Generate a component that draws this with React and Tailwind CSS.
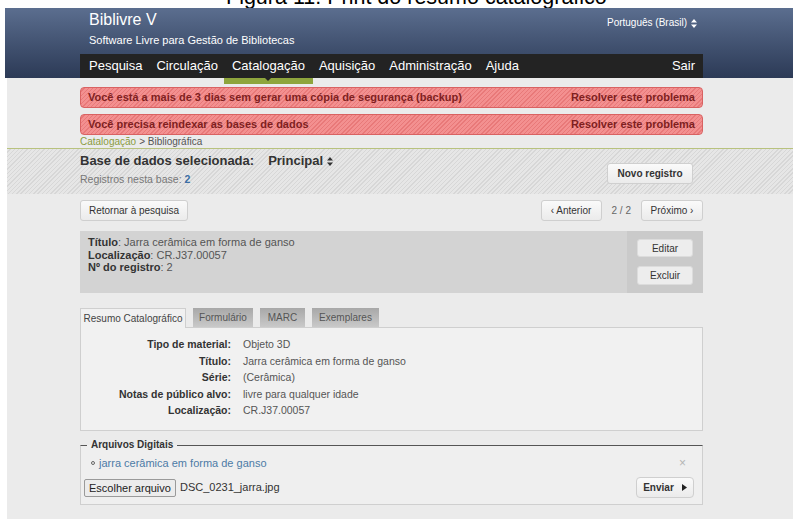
import React from 'react';

const navItems = ['Pesquisa', 'Circulação', 'Catalogação', 'Aquisição', 'Administração', 'Ajuda'];

const alerts = [
  'Você está a mais de 3 dias sem gerar uma cópia de segurança (backup)',
  'Você precisa reindexar as bases de dados',
];

const fields = [
  ['Tipo de material:', 'Objeto 3D'],
  ['Título:', 'Jarra cerâmica em forma de ganso'],
  ['Série:', '(Cerâmica)'],
  ['Notas de público alvo:', 'livre para qualquer idade'],
  ['Localização:', 'CR.J37.00057'],
];

const tabs = [
  { label: 'Resumo Catalográfico', w: 'w-[106px]', active: true },
  { label: 'Formulário', w: 'w-[60px]' },
  { label: 'MARC', w: 'w-[45px]' },
  { label: 'Exemplares', w: 'w-[67px]' },
];

function Btn({ children, className = '' }) {
  return (
    <button
      type="button"
      className={`flex items-center justify-center rounded-[3px] border border-[#cfcfcf] bg-gradient-to-b from-[#fafafa] to-[#ebebeb] text-[10px] text-[#333] ${className}`}
    >
      {children}
    </button>
  );
}

function UpDown() {
  return (
    <svg width="6" height="9" viewBox="0 0 6 9" className="ml-[4px] inline-block">
      <path d="M3 0 L6 3.5 H0 Z M3 9 L6 5.5 H0 Z" fill="currentColor" />
    </svg>
  );
}

export default function App() {
  return (
    <div className="flex h-[519px] w-[793px] flex-col overflow-hidden bg-white font-['Liberation_Sans',Arial,sans-serif]">
      {/* caption of the document, mostly clipped */}
      <div className="h-[8px] shrink-0 overflow-hidden">
        <p className="-mt-[13px] pl-[226px] text-[21.5px] leading-none text-black">
          Figura 11: Print do resumo catalográfico
        </p>
      </div>

      <header className="ml-[5px] h-[70px] shrink-0 bg-gradient-to-b from-[#5b6e8f] to-[#2c3a56]">
        <div className="ml-[75px] flex w-[623px] flex-col">
          <div className="flex h-[46px] justify-between">
            <div className="pt-[3px] pl-[9px] text-white">
              <div className="text-[16px] leading-[18px]">Biblivre V</div>
              <div className="mt-[5px] text-[11px] leading-[13px]">Software Livre para Gestão de Bibliotecas</div>
            </div>
            <div className="flex items-start pt-[9px] pr-[6px] text-[10px] text-white">
              <span className="flex items-center leading-[12px]">
                Português (Brasil)
                <UpDown />
              </span>
            </div>
          </div>
          <nav className="flex h-[24px] items-center justify-between bg-[#232323] pl-[9px] pr-[8px] text-[13px] text-white">
            <div className="flex items-center gap-[14px]">
              {navItems.map((item) => (
                <span key={item} className="relative leading-[24px]">
                  {item}
                  {item === 'Catalogação' && (
                    <span className="absolute top-full -left-[8px] -right-[8px] h-[6px] bg-[#8ea53d]">
                      <span className="absolute left-1/2 top-0 -ml-[3px] h-0 w-0 border-x-[3px] border-t-[3px] border-x-transparent border-t-[#232323]" />
                    </span>
                  )}
                </span>
              ))}
            </div>
            <span>Sair</span>
          </nav>
        </div>
      </header>

      <main className="ml-[7px] flex-1 bg-[#ebebeb]">
        <div className="ml-[73px] w-[623px] pt-[9px]">
          <div className="flex flex-col gap-[6px]">
            {alerts.map((text) => (
              <div
                key={text}
                className="flex h-[21px] items-center justify-between rounded-[4px] border border-[#d96262] bg-[repeating-linear-gradient(135deg,#f39090_0px,#f39090_2px,#e87979_2px,#e87979_3px)] px-[7px] text-[11px] font-bold text-[#7f1f1f]"
              >
                <span>{text}</span>
                <span>Resolver este problema</span>
              </div>
            ))}
          </div>
          <div className="flex h-[13px] items-center text-[10px] text-[#555]">
            <span className="text-[#8a9b3f]">Catalogação</span>
            <span className="ml-[3px]">&gt; Bibliográfica</span>
          </div>
        </div>

        <section className="h-[46px] border-t border-[#b8c27e] bg-[repeating-linear-gradient(135deg,#e6e6e6_0px,#e6e6e6_2px,#d7d7d7_2px,#d7d7d7_3px)]">
          <div className="ml-[73px] flex w-[623px] justify-between">
            <div className="pt-[4px]">
              <div className="flex items-center text-[13px] font-bold leading-[16px] text-[#333]">
                Base de dados selecionada:
                <span className="ml-[14px] flex items-center">
                  Principal
                  <UpDown />
                </span>
              </div>
              <div className="mt-[4px] text-[10.5px] leading-[13px] text-[#777]">
                Registros nesta base: <span className="font-bold text-[#3b6ea5]">2</span>
              </div>
            </div>
            <div className="pt-[14px] pr-[10px]">
              <Btn className="h-[21px] w-[86px] font-bold">Novo registro</Btn>
            </div>
          </div>
        </section>

        <div className="ml-[73px] w-[623px]">
          <div className="mt-[6px] flex h-[21px] items-center justify-between">
            <Btn className="h-[21px] w-[108px]">Retornar à pesquisa</Btn>
            <div className="flex items-center">
              <Btn className="h-[21px] w-[61px]">‹ Anterior</Btn>
              <span className="mx-[10px] text-[10px] text-[#666]">2 / 2</span>
              <Btn className="h-[21px] w-[62px]">Próximo ›</Btn>
            </div>
          </div>

          <div className="mt-[10px] flex h-[62px] bg-[#d3d3d3]">
            <div className="flex-1 pt-[5px] pl-[8px] text-[11px] leading-[12.5px] text-[#555]">
              <div><b className="text-[#333]">Título</b>: Jarra cerâmica em forma de ganso</div>
              <div><b className="text-[#333]">Localização</b>: CR.J37.00057</div>
              <div><b className="text-[#333]">Nº do registro</b>: 2</div>
            </div>
            <div className="flex w-[76px] flex-col items-center gap-[9px] bg-[#cacaca] pt-[8px]">
              <Btn className="h-[18px] w-[56px] border-[#dcdcdc] bg-none bg-[#ededed]">Editar</Btn>
              <Btn className="h-[19px] w-[56px] border-[#dcdcdc] bg-none bg-[#ededed]">Excluir</Btn>
            </div>
          </div>

          <div className="mt-[15px] flex h-[19px] items-end gap-[7px]">
            {tabs.map((t) =>
              t.active ? (
                <div
                  key={t.label}
                  className={`${t.w} relative z-10 -mb-px flex h-[20px] items-center justify-center border border-b-0 border-[#cfcfcf] bg-[#f1f1f1] text-[10px] text-[#444]`}
                >
                  {t.label}
                </div>
              ) : (
                <div
                  key={t.label}
                  className={`${t.w} flex h-[19px] items-center justify-center bg-gradient-to-b from-[#a8a8a8] to-[#c9c9c9] text-[10px] text-[#555]`}
                >
                  {t.label}
                </div>
              )
            )}
          </div>

          <div className="h-[104px] border border-[#cfcfcf] bg-[#f1f1f1] pt-[8px]">
            <div className="grid grid-cols-[150px_1fr] gap-x-[12px] text-[10.5px] leading-[16.5px]">
              {fields.map(([label, value]) => (
                <React.Fragment key={label}>
                  <span className="text-right font-bold text-[#333]">{label}</span>
                  <span className="text-[#555]">{value}</span>
                </React.Fragment>
              ))}
            </div>
          </div>

          <fieldset className="mt-[8px] h-[66px] border border-t-[#555] border-x-[#cfcfcf] border-b-[#cfcfcf] bg-[#efefef] px-[6px]">
            <legend className="px-[4px] text-[10px] font-bold leading-[12px] text-[#333]">Arquivos Digitais</legend>
            <div className="mt-[3px] flex h-[18px] items-center justify-between pr-[10px] pl-[4px]">
              <span className="flex items-center text-[11px] text-[#4d7ba6]">
                <span className="mr-[4px] inline-block h-[4px] w-[4px] rounded-full border border-[#666]" />
                jarra cerâmica em forma de ganso
              </span>
              <span className="text-[12px] text-[#b5b5b5]">×</span>
            </div>
            <div className="mt-[5px] -ml-[3px] flex items-center justify-between pr-[2px]">
              <div className="flex items-center text-[11px] text-[#333]">
                <button type="button" className="h-[18px] rounded-[2px] border border-[#9a9a9a] bg-[#ececec] px-[4px] text-[11px] text-[#222]">
                  Escolher arquivo
                </button>
                <span className="ml-[4px]">DSC_0231_jarra.jpg</span>
              </div>
              <Btn className="h-[21px] w-[58px] rounded-[4px] font-bold">
                Enviar
                <svg width="5" height="7" viewBox="0 0 5 7" className="ml-[8px]">
                  <path d="M0 0 L5 3.5 L0 7 Z" fill="#222" />
                </svg>
              </Btn>
            </div>
          </fieldset>
        </div>
      </main>
    </div>
  );
}
